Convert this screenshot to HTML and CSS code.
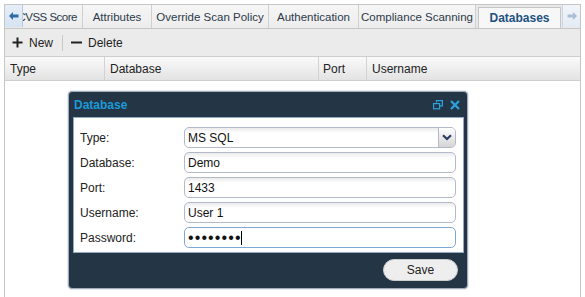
FILE: index.html
```html
<!DOCTYPE html>
<html>
<head>
<meta charset="utf-8">
<link rel="stylesheet" href="styles.css">
</head>
<body>
<div class="app">
  <div class="tabbar">
    <div class="scroll scroll-left">
      <svg width="10" height="8" viewBox="0 0 10 8"><path d="M0 4 L4 0 L4 2.5 L9.5 2.5 L9.5 5.5 L4 5.5 L4 8 Z" fill="#2e6aa6"/></svg>
    </div>
    <div class="tabview">
      <div class="tablist">
        <div class="tab w-cvss">CVSS Score</div>
        <div class="tab w-attr">Attributes</div>
        <div class="tab w-over">Override Scan Policy</div>
        <div class="tab w-auth">Authentication</div>
        <div class="tab w-comp">Compliance Scanning</div>
        <div class="tab active w-db">Databases</div>
      </div>
    </div>
    <div class="scroll scroll-right">
      <svg width="10" height="8" viewBox="0 0 10 8"><path d="M10 4 L6 0 L6 2.5 L0.5 2.5 L0.5 5.5 L6 5.5 L6 8 Z" fill="#a9bed4"/></svg>
    </div>
  </div>

  <div class="toolbar">
    <div class="tool">
      <svg width="11" height="11" viewBox="0 0 11 11"><path d="M5.5 0.5 V10.5 M0.5 5.5 H10.5" stroke="#222" stroke-width="2"/></svg>
      <span>New</span>
    </div>
    <span class="sep"></span>
    <div class="tool">
      <svg width="11" height="11" viewBox="0 0 11 11"><path d="M0 5.5 H11" stroke="#222" stroke-width="2"/></svg>
      <span>Delete</span>
    </div>
  </div>

  <div class="grid-head">
    <div class="col c-type">Type</div>
    <div class="col c-db">Database</div>
    <div class="col c-port">Port</div>
    <div class="col c-user">Username</div>
  </div>

  <div class="grid-body">
    <div class="dialog">
      <div class="dlg-head">
        <span class="dlg-title">Database</span>
        <span class="dlg-icons">
          <svg width="10" height="10" viewBox="0 0 10 10"><path d="M3.5 2.5 V0.6 H9.4 V5.8 H6.8" fill="none" stroke="#2aa3de" stroke-width="1.2"/><rect x="0.6" y="3.6" width="6" height="5.2" fill="none" stroke="#2aa3de" stroke-width="1.2"/></svg>
          <svg width="10" height="10" viewBox="0 0 10 10"><path d="M1 1 L9 9 M9 1 L1 9" stroke="#2aa3de" stroke-width="2.2"/></svg>
        </span>
      </div>
      <div class="dlg-body">
        <label class="lbl">Type:</label>
        <div class="field select">
          <span class="val">MS SQL</span>
          <span class="select-btn"><svg width="10" height="7" viewBox="0 0 10 7"><path d="M1 1.2 L5 5 L9 1.2" fill="none" stroke="#2b3d63" stroke-width="2.2"/></svg></span>
        </div>
        <label class="lbl">Database:</label>
        <div class="field"><span class="val">Demo</span></div>
        <label class="lbl">Port:</label>
        <div class="field"><span class="val">1433</span></div>
        <label class="lbl">Username:</label>
        <div class="field"><span class="val">User 1</span></div>
        <label class="lbl">Password:</label>
        <div class="field focus"><span class="val dots">••••••••</span><span class="caret"></span></div>
      </div>
      <div class="dlg-foot">
        <button class="btn">Save</button>
      </div>
    </div>
  </div>
</div>
</body>
</html>
```

FILE: styles.css
```css
html, body {
  margin: 0;
  height: 100%;
  background: #fff;
}
body {
  font-family: "Liberation Sans", Arial, sans-serif;
  font-size: 12px;
  color: #222;
}
.app {
  margin: 4px 0 0 4px;
  width: 577px;
  height: 293px;
  box-sizing: border-box;
  border: 1px solid #c6c6c6;
  border-bottom: none;
  display: flex;
  flex-direction: column;
}

/* tabs */
.tabbar {
  height: 24px;
  flex: none;
  box-sizing: border-box;
  border-bottom: 1px solid #c6c6c6;
  background: #e9e9e9;
  display: flex;
}
.scroll {
  width: 18px;
  height: 22px;
  flex: none;
  box-sizing: border-box;
  display: flex;
  align-items: center;
  justify-content: center;
}
.scroll-left {
  background: linear-gradient(#e6eef8, #d6e3f2);
  border-right: 1px solid #b7cce4;
}
.scroll-right {
  background: linear-gradient(#f1f5fa, #e4ebf4);
  border-left: 1px solid #c9d8ea;
}
.tabview {
  flex: 1;
  overflow: hidden;
}
.tablist {
  display: flex;
  height: 100%;
  margin-left: -6px;
}
.tab {
  flex: none;
  box-sizing: border-box;
  height: 23px;
  border-right: 1px solid #d0d0d0;
  background: linear-gradient(#f6f6f6, #ececec);
  color: #2c3a4a;
  font-size: 11.5px;
  display: flex;
  align-items: center;
  justify-content: center;
  white-space: nowrap;
}
.tab.active {
  margin: 2px 0 0 2px;
  height: 21px;
  border: 1px solid #c6c6c6;
  border-bottom: none;
  background: #f7f7f7;
  color: #1c5282;
  font-weight: bold;
  font-size: 12px;
}
.w-cvss {
  width: 66px;
  justify-content: flex-end;
  padding-right: 5px;
  letter-spacing: -0.5px;
}
.w-attr { width: 69px; }
.w-over { width: 117px; }
.w-auth { width: 90px; }
.w-comp { width: 117px; }
.w-db { width: 83px; }

/* toolbar */
.toolbar {
  height: 28px;
  flex: none;
  box-sizing: border-box;
  border-bottom: 1px solid #cecece;
  background: #ebebeb;
  display: flex;
  align-items: center;
  padding-left: 7px;
}
.tool {
  display: flex;
  align-items: center;
  gap: 6px;
}
.sep {
  width: 1px;
  height: 16px;
  background: #c9c9c9;
  margin: 0 8px 0 9px;
}

/* grid */
.grid-head {
  height: 24px;
  flex: none;
  box-sizing: border-box;
  border-bottom: 1px solid #cecece;
  background: linear-gradient(#fafafa, #e3e3e3);
  display: flex;
}
.col {
  box-sizing: border-box;
  border-right: 1px solid #d2d2d2;
  padding-left: 5px;
  display: flex;
  align-items: center;
}
.c-type { width: 100px; }
.c-db { width: 214px; }
.c-port { width: 48px; padding-left: 4px; }
.c-user { flex: 1; border-right: none; }
.grid-body {
  flex: 1;
  position: relative;
}

/* dialog */
.dialog {
  position: absolute;
  left: 63px;
  top: 10px;
  width: 400px;
  height: 198px;
  box-sizing: border-box;
  border: 1px solid #a3acba;
  border-radius: 4px;
  background: #243546;
  box-shadow: 0 0 0 1px #e6e9ee;
  display: flex;
  flex-direction: column;
}
.dlg-head {
  height: 25px;
  flex: none;
  display: flex;
  align-items: center;
  justify-content: space-between;
  padding: 0 7px 0 5px;
}
.dlg-title {
  color: #1b9ad7;
  font-weight: bold;
  font-size: 12px;
}
.dlg-icons {
  display: flex;
  gap: 7px;
}
.dlg-body {
  margin: 0 3px 0 4px;
  border: 1px solid #93a9c5;
  background: #fff;
  padding: 9px 6px 4px 6px;
  display: grid;
  grid-template-columns: 104px 272px;
  grid-auto-rows: 21px;
  row-gap: 4px;
}
.lbl {
  display: flex;
  align-items: center;
  font-size: 12px;
  color: #222;
}
.field {
  box-sizing: border-box;
  height: 21px;
  border: 1px solid #b3b9c9;
  border-radius: 5px;
  background: linear-gradient(#ebebeb, #fff 5px);
  padding-left: 3px;
  display: flex;
  align-items: center;
  overflow: hidden;
}
.field.focus {
  border-color: #7ea7d8;
  background: #fff;
}
.val {
  font-size: 12px;
  color: #111;
}
.dots {
  font-size: 16px;
  letter-spacing: 1.1px;
  line-height: 1;
}
.caret {
  display: inline-block;
  width: 1px;
  height: 14px;
  background: #000;
  margin-left: -1px;
}
.select {
  justify-content: space-between;
  padding-right: 0;
}
.select-btn {
  width: 17px;
  height: 100%;
  box-sizing: border-box;
  border-left: 1px solid #b3b9c9;
  background: linear-gradient(#ffffff, #d4d4d4);
  display: flex;
  align-items: center;
  justify-content: center;
}
.dlg-foot {
  flex: 1;
  display: flex;
  justify-content: flex-end;
  align-items: flex-start;
  padding: 6px 9px 0 0;
}
.btn {
  width: 75px;
  height: 22px;
  border: 1px solid #cdcdcd;
  border-radius: 11px;
  background: #eeeeee;
  font-family: "Liberation Sans", Arial, sans-serif;
  font-size: 12px;
  color: #222;
  padding: 0;
}
```
